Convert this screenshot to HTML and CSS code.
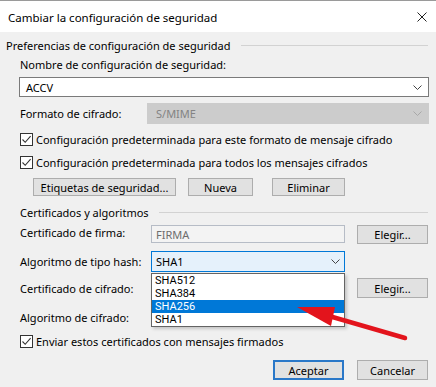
FILE: index.html
```html
<!DOCTYPE html>
<html lang="es">
<head>
<meta charset="utf-8">
<title>Cambiar la configuración de seguridad</title>
<link rel="stylesheet" href="styles.css">
</head>
<body>
<div class="window">
  <div class="titlebar">
    <span class="title">Cambiar la configuración de seguridad</span>
    <svg class="close" width="10" height="10" viewBox="0 0 10 10"><path d="M0.5 0.5 L9.5 9.5 M9.5 0.5 L0.5 9.5" stroke="#222" stroke-width="1" fill="none"/></svg>
  </div>
  <div class="content">
    <div class="group-head"><span>Preferencias de configuración de seguridad</span><span class="rule"></span></div>
    <div class="indent">
      <div class="line lbl-name">Nombre de configuración de seguridad:</div>
      <div class="combo combo-main"><span>ACCV</span><svg class="chev" width="9" height="5" viewBox="0 0 9 5"><path d="M0.5 0.5 L4.5 4.5 L8.5 0.5" stroke="#444" fill="none"/></svg></div>
      <div class="row-format">
        <span class="lbl-fmt">Formato de cifrado:</span>
        <div class="combo combo-disabled"><span>S/MIME</span><svg class="chev" width="9" height="5" viewBox="0 0 9 5"><path d="M0.5 0.5 L4.5 4.5 L8.5 0.5" stroke="#a8a8a8" fill="none"/></svg></div>
      </div>
      <div class="check check1"><span class="box"><svg width="11" height="11" viewBox="0 0 11 11"><path d="M1.5 5.5 L4.2 8.3 L9.6 2.2" stroke="#333" stroke-width="1.1" fill="none"/></svg></span><span>Configuración predeterminada para este formato de mensaje cifrado</span></div>
      <div class="check check2"><span class="box"><svg width="11" height="11" viewBox="0 0 11 11"><path d="M1.5 5.5 L4.2 8.3 L9.6 2.2" stroke="#333" stroke-width="1.1" fill="none"/></svg></span><span>Configuración predeterminada para todos los mensajes cifrados</span></div>
      <div class="btn-row">
        <div class="btn btn-labels">Etiquetas de seguridad...</div>
        <div class="btn btn-new">Nueva</div>
        <div class="btn btn-del">Eliminar</div>
      </div>
    </div>
    <div class="group-head sub"><span>Certificados y algoritmos</span><span class="rule"></span></div>
    <div class="indent">
      <div class="frow r-firma">
        <span class="flbl">Certificado de firma:</span>
        <div class="field field-ro">FIRMA</div>
        <div class="btn btn-pick">Elegir...</div>
      </div>
      <div class="frow r-hash">
        <span class="flbl">Algoritmo de tipo hash:</span>
        <div class="combo combo-focus"><span>SHA1</span><svg class="chev" width="9" height="5" viewBox="0 0 9 5"><path d="M0.5 0.5 L4.5 4.5 L8.5 0.5" stroke="#444" fill="none"/></svg></div>
      </div>
      <div class="frow r-cif">
        <span class="flbl">Certificado de cifrado:</span>
        <div class="field-hidden"></div>
        <div class="btn btn-pick">Elegir...</div>
      </div>
      <div class="frow r-alg">
        <span class="flbl">Algoritmo de cifrado:</span>
      </div>
      <div class="check check3"><span class="box"><svg width="11" height="11" viewBox="0 0 11 11"><path d="M1.5 5.5 L4.2 8.3 L9.6 2.2" stroke="#333" stroke-width="1.1" fill="none"/></svg></span><span>Enviar estos certificados con mensajes firmados</span></div>
    </div>
    <div class="footer">
      <div class="btn btn-default">Aceptar</div>
      <div class="btn btn-cancel">Cancelar</div>
    </div>
  </div>
  <ul class="dropdown">
    <li>SHA512</li>
    <li>SHA384</li>
    <li class="sel">SHA256</li>
    <li>SHA1</li>
  </ul>
  <svg class="arrow" width="436" height="387" viewBox="0 0 436 387">
    <path d="M329 316 L405 338" stroke="#e3141c" stroke-width="4.5" stroke-linecap="round" fill="none"/>
    <polygon points="297,307 335,307 331,326" fill="#e3141c"/>
  </svg>
</div>
</body>
</html>
```
FILE: styles.css
```css
* { box-sizing: border-box; }
html, body { margin: 0; padding: 0; }
body {
  background: #f0f0f0;
  font-family: "Noto Sans", "Open Sans", sans-serif;
  font-size: 11px;
  color: #000;
}
.window {
  position: relative;
  width: 436px;
  height: 387px;
  background: #f0f0f0;
  overflow: hidden;
}
.titlebar {
  height: 32px;
  background: #fff;
  border-top: 1px solid #9a9a9a;
  display: flex;
  align-items: center;
  padding: 0 9px 0 8px;
}
.title { flex: 1; font-size: 11.5px; padding-top: 1px; }
.close { display: block; margin-top: 1px; }

.content { padding: 0; }
.group-head {
  height: 14px;
  margin-top: 7px;
  padding-left: 6px;
  padding-right: 8px;
  display: flex;
  align-items: center;
  gap: 10px;
  line-height: 14px;
  white-space: nowrap;
}
.group-head .rule {
  flex: 1;
  height: 1px;
  background: #d2d2d2;
  margin-top: -2px;
}
.group-head.sub { margin-top: 10px; padding-left: 20px; }

.indent { padding-left: 19px; padding-right: 7px; }
.line { line-height: 14px; height: 14px; padding-left: 1px; }
.lbl-name { margin-top: 5px; }

.combo {
  display: flex;
  align-items: center;
  border: 1px solid #7a7a7a;
  background: #fff;
  padding: 0 6px 0 6px;
}
.combo span { flex: 1; }
.chev { display: block; }
.combo-main { margin-top: 5px; height: 20px; }
.row-format {
  margin-top: 6px;
  height: 21px;
  display: flex;
  align-items: center;
}
.lbl-fmt { width: 128px; padding-left: 1px; }
.combo-disabled {
  flex: 1;
  height: 21px;
  background: #cccccc;
  border-color: #cccccc;
  color: #838383;
  padding-left: 8px;
}

.check {
  display: flex;
  align-items: center;
  height: 13px;
  padding-left: 1px;
  gap: 3px;
  white-space: nowrap;
}
.check .box {
  width: 13px;
  height: 13px;
  border: 1px solid #333;
  background: #fff;
  display: flex;
  align-items: center;
  justify-content: center;
}
.check .box svg { display: block; }
.check1 { margin-top: 9px; }
.check2 { margin-top: 10px; }

.btn {
  display: flex;
  align-items: center;
  justify-content: center;
  background: #e1e1e1;
  border: 1px solid #adadad;
  white-space: nowrap;
}
.btn-row { margin-top: 9px; height: 18px; display: flex; padding-left: 14px; }
.btn-labels { width: 143px; }
.btn-new { width: 65px; margin-left: 12px; }
.btn-del { width: 73px; margin-left: 19px; }

.frow { display: flex; align-items: center; }
.flbl { width: 130px; margin-right: 2px; padding-left: 1px; white-space: nowrap; }
.field {
  width: 194px;
  height: 18px;
  display: flex;
  align-items: center;
  padding-left: 4px;
}
.field-ro {
  background: #f3f3f3;
  border: 1px solid #b6bcc6;
  color: #6d6d6d;
}
.field-hidden { width: 194px; }
.btn-pick { width: 71px; height: 19px; margin-left: 12px; }
.r-firma { margin-top: 5px; height: 19px; align-items: flex-start; }
.r-hash { margin-top: 7px; height: 21px; }
.combo-focus {
  width: 194px;
  height: 21px;
  background: #e5f1fb;
  border-color: #0078d7;
  padding-left: 4px;
  padding-right: 4px;
}
.r-cif { margin-top: 6px; height: 20px; }
.r-cif .btn-pick { height: 20px; }
.r-alg { margin-top: 9px; height: 20px; }
.check3 { margin-top: 8px; }

.footer {
  margin-top: 12px;
  height: 20px;
  display: flex;
  justify-content: flex-end;
  padding-right: 8px;
  gap: 13px;
}
.footer .btn { width: 71px; }
.btn-default { border: 2px solid #2a78c8; }

.dropdown {
  position: absolute;
  left: 151px;
  top: 273px;
  width: 194px;
  margin: 0;
  padding: 0;
  list-style: none;
  background: #fff;
  border: 1px solid #646464;
  box-shadow: 2px 2px 3px rgba(0,0,0,0.18);
}
.dropdown li {
  height: 13px;
  line-height: 13px;
  padding-left: 3px;
  font-family: Roboto, "Noto Sans", sans-serif;
  font-size: 11px;
}
.dropdown li.sel { background: #0078d7; color: #fff; }

.arrow { position: absolute; left: 0; top: 0; pointer-events: none; }
```
